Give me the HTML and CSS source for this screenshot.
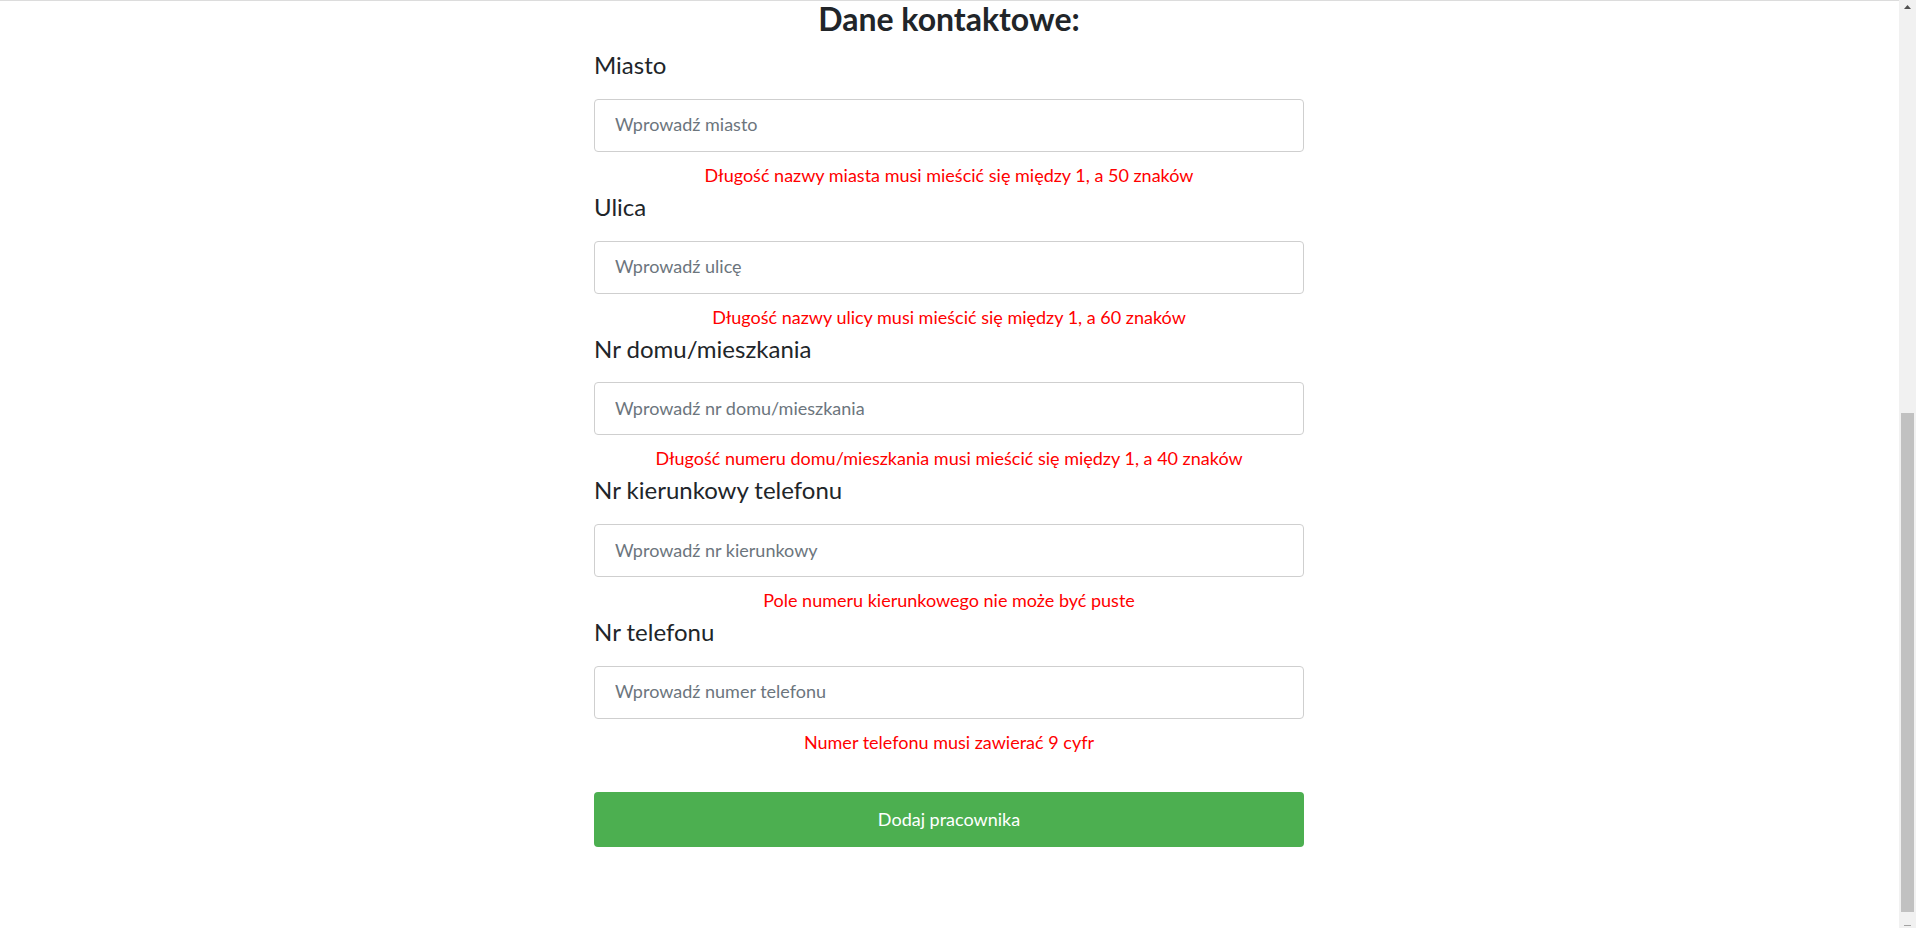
FILE: index.html
```html
<!DOCTYPE html>
<html lang="pl">
<head>
<meta charset="utf-8">
<title>Dane kontaktowe</title>
<link rel="stylesheet" href="styles.css">
</head>
<body>
<div class="layout">
  <main class="page">
    <div class="container">
      <h2 class="title">Dane kontaktowe:</h2>
      <form class="form">
        <div class="group">
          <label class="label" for="city">Miasto</label>
          <input class="input" id="city" type="text" placeholder="Wprowadź miasto">
          <div class="error">Długość nazwy miasta musi mieścić się między 1, a 50 znaków</div>
        </div>
        <div class="group">
          <label class="label" for="street">Ulica</label>
          <input class="input" id="street" type="text" placeholder="Wprowadź ulicę">
          <div class="error">Długość nazwy ulicy musi mieścić się między 1, a 60 znaków</div>
        </div>
        <div class="group">
          <label class="label" for="house">Nr domu/mieszkania</label>
          <input class="input" id="house" type="text" placeholder="Wprowadź nr domu/mieszkania">
          <div class="error">Długość numeru domu/mieszkania musi mieścić się między 1, a 40 znaków</div>
        </div>
        <div class="group">
          <label class="label" for="area">Nr kierunkowy telefonu</label>
          <input class="input" id="area" type="text" placeholder="Wprowadź nr kierunkowy">
          <div class="error">Pole numeru kierunkowego nie może być puste</div>
        </div>
        <div class="group">
          <label class="label" for="phone">Nr telefonu</label>
          <input class="input" id="phone" type="text" placeholder="Wprowadź numer telefonu">
          <div class="error">Numer telefonu musi zawierać 9 cyfr</div>
        </div>
        <button class="submit" type="button">Dodaj pracownika</button>
      </form>
    </div>
  </main>
  <div class="scrollbar">
    <div class="sb-btn">
      <svg width="9" height="6" viewBox="0 0 9 6"><polygon points="4.5,1 8,5 1,5" fill="#505050"/></svg>
    </div>
    <div class="sb-track">
      <div class="sb-thumb"></div>
    </div>
    <div class="sb-btn-bottom">
      <div class="sb-line"></div>
    </div>
  </div>
</div>
</body>
</html>
```
FILE: styles.css
```css
html, body {
  margin: 0;
  padding: 0;
  background: #fff;
}

body {
  font-family: "Lato", "Liberation Sans", sans-serif;
  color: #212529;
}

.layout {
  display: flex;
  height: 928px;
  overflow: hidden;
}

.page {
  flex: 1;
  border-top: 1px solid #dcdcdc;
  padding-right: 1px;
}

.container {
  width: 710px;
  margin: 0 auto;
}

.title {
  margin: 0;
  font-size: 32px;
  font-weight: 700;
  line-height: 36px;
  text-align: center;
}

.form {
  display: flex;
  flex-direction: column;
  margin-top: 14px;
}

.group {
  display: flex;
  flex-direction: column;
  margin-bottom: 4px;
}

.label {
  font-size: 24px;
  line-height: 28.8px;
  margin-bottom: 19px;
}

.input {
  box-sizing: border-box;
  height: 53px;
  padding: 11px 20px 13px;
  font-family: "Lato", "Liberation Sans", sans-serif;
  font-size: 18px;
  line-height: 27px;
  border: 1px solid #cfcfcf;
  border-radius: 4px;
  color: #495057;
  background: #fff;
  outline: none;
}

.input::placeholder {
  color: #6c757d;
  opacity: 1;
}

.error {
  margin-top: 10px;
  font-size: 18px;
  line-height: 27px;
  color: #ff0000;
  text-align: center;
}

.submit {
  margin-top: 32px;
  height: 55px;
  border: none;
  border-radius: 4px;
  background: #4caf50;
  color: #fff;
  font-family: "Lato", "Liberation Sans", sans-serif;
  font-size: 18px;
  line-height: 27px;
  padding: 0;
}

.scrollbar {
  width: 17px;
  flex: none;
  background: #f1f1f1;
  display: flex;
  flex-direction: column;
}

.sb-btn {
  height: 17px;
  display: flex;
  justify-content: center;
  align-items: flex-start;
  padding-top: 4px;
  box-sizing: border-box;
}

.sb-track {
  flex: 1;
  display: flex;
  flex-direction: column;
  padding: 396px 2px 0;
}

.sb-thumb {
  height: 499px;
  background: #c1c1c1;
}

.sb-btn-bottom {
  height: 16px;
  display: flex;
  justify-content: center;
  align-items: flex-end;
  padding-bottom: 2px;
  box-sizing: border-box;
}

.sb-line {
  width: 7px;
  height: 1px;
  background: #a3a3a3;
}
```
